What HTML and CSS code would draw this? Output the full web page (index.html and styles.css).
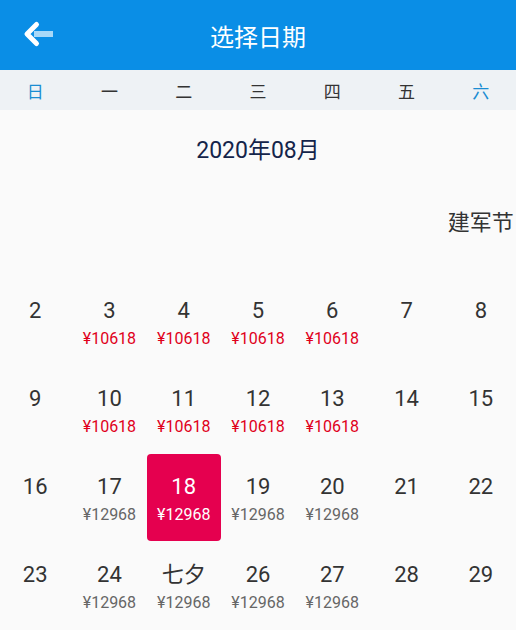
FILE: index.html
```html
<!DOCTYPE html>
<html>
<head>
<meta charset="utf-8">
<title>选择日期</title>
<link rel="stylesheet" href="styles.css">
</head>
<body>
<header class="topbar">
    <a class="back">
        <svg width="32" height="28" viewBox="0 0 32 28">
            <path d="M11 14H30" stroke="#A8D8F8" stroke-width="6"/>
            <path d="M13.5 4.5L4 14L13.5 23.5" stroke="#FFFFFF" stroke-width="5" fill="none" stroke-linecap="round" stroke-linejoin="round"/>
        </svg>
    </a>
    <h1>选择日期</h1>
</header>
<ul class="weekdays">
    <li class="weekend">日</li>
    <li>一</li>
    <li>二</li>
    <li>三</li>
    <li>四</li>
    <li>五</li>
    <li class="weekend">六</li>
</ul>
<section class="month">
    <h2>2020年08月</h2>
    <div class="days">
        <div class="day"></div>
        <div class="day"></div>
        <div class="day"></div>
        <div class="day"></div>
        <div class="day"></div>
        <div class="day"></div>
        <div class="day"><span class="num">建军节</span></div>

        <div class="day"><span class="num">2</span></div>
        <div class="day"><span class="num">3</span><span class="price hot">¥10618</span></div>
        <div class="day"><span class="num">4</span><span class="price hot">¥10618</span></div>
        <div class="day"><span class="num">5</span><span class="price hot">¥10618</span></div>
        <div class="day"><span class="num">6</span><span class="price hot">¥10618</span></div>
        <div class="day"><span class="num">7</span></div>
        <div class="day"><span class="num">8</span></div>

        <div class="day"><span class="num">9</span></div>
        <div class="day"><span class="num">10</span><span class="price hot">¥10618</span></div>
        <div class="day"><span class="num">11</span><span class="price hot">¥10618</span></div>
        <div class="day"><span class="num">12</span><span class="price hot">¥10618</span></div>
        <div class="day"><span class="num">13</span><span class="price hot">¥10618</span></div>
        <div class="day"><span class="num">14</span></div>
        <div class="day"><span class="num">15</span></div>

        <div class="day"><span class="num">16</span></div>
        <div class="day"><span class="num">17</span><span class="price">¥12968</span></div>
        <div class="day selected"><span class="num">18</span><span class="price">¥12968</span></div>
        <div class="day"><span class="num">19</span><span class="price">¥12968</span></div>
        <div class="day"><span class="num">20</span><span class="price">¥12968</span></div>
        <div class="day"><span class="num">21</span></div>
        <div class="day"><span class="num">22</span></div>

        <div class="day"><span class="num">23</span></div>
        <div class="day"><span class="num">24</span><span class="price">¥12968</span></div>
        <div class="day"><span class="num">七夕</span><span class="price">¥12968</span></div>
        <div class="day"><span class="num">26</span><span class="price">¥12968</span></div>
        <div class="day"><span class="num">27</span><span class="price">¥12968</span></div>
        <div class="day"><span class="num">28</span></div>
        <div class="day"><span class="num">29</span></div>
    </div>
</section>
</body>
</html>
```
FILE: styles.css
```css
body {
    margin: 0px;
    background-color: #FAFAFA;
    font-family: Roboto, "Noto Sans CJK SC", sans-serif;
    overflow: hidden;
}
.topbar {
    height: 70px;
    background-color: #0A8EE6;
    display: flex;
    align-items: center;
    justify-content: center;
    position: relative;
}
.topbar h1 {
    margin: 0px;
    font-size: 24px;
    font-weight: normal;
    color: #FFFFFF;
}
.back {
    position: absolute;
    left: 23px;
    top: 20px;
    display: block;
    width: 32px;
    height: 28px;
}
.weekdays,
.days {
    width: 520px;
    margin: 0px 0px 0px -2px;
    padding: 0px;
    display: grid;
    grid-template-columns: repeat(7, 1fr);
}
.weekdays {
    height: 40px;
    background-color: #EEF2F5;
    box-shadow: 2px 0px 0px #EEF2F5;
    align-items: center;
}
.weekdays li {
    list-style: none;
    text-align: center;
    font-size: 17px;
    color: #333333;
}
.weekdays li.weekend {
    color: #1A8DD2;
}
.month h2 {
    margin: 0px;
    height: 80px;
    padding-bottom: 5px;
    box-sizing: border-box;
    display: flex;
    align-items: center;
    justify-content: center;
    font-size: 23px;
    font-weight: normal;
    color: #14244A;
}
.days {
    grid-auto-rows: 87px;
    row-gap: 1px;
}
.day {
    display: flex;
    flex-direction: column;
    align-items: center;
    padding-top: 19px;
    box-sizing: border-box;
    white-space: nowrap;
}
.day .num {
    font-size: 22px;
    line-height: 28px;
    color: #333333;
}
.day .price {
    margin-top: 3px;
    font-size: 16px;
    line-height: 22px;
    color: #666666;
}
.day .price.hot {
    color: #E0001A;
}
.day.selected {
    background-color: #E5004F;
    border-radius: 4px;
}
.day.selected .num,
.day.selected .price {
    color: #FFFFFF;
}
```
